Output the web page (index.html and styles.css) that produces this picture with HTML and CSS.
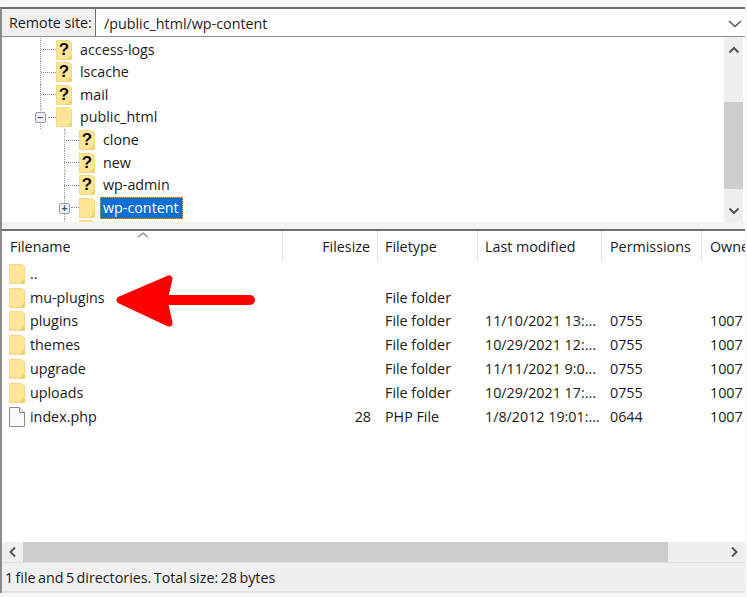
FILE: index.html
```html
<!DOCTYPE html>
<html lang="en">
<head>
<meta charset="utf-8">
<title>Remote site</title>
<link rel="stylesheet" href="styles.css">
</head>
<body>
<svg class="defs" width="0" height="0">
  <symbol id="folder" viewBox="0 0 16 20">
    <path d="M.5.5h12l3 2v17H.5z" fill="#ffe596" stroke="#f6d77f"/>
    <path d="M15.5 14v5.500h-4.500z" fill="#f3cf6a"/>
  </symbol>
  <symbol id="file" viewBox="0 0 16 20">
    <path d="M.5.5h10l5 5v14H.5z" fill="#fafafa" stroke="#8b8b8b"/>
    <path d="M10.500.5v5h5" fill="#eee" stroke="#8b8b8b"/>
  </symbol>
</svg>
<main class="window">
  <div class="site-bar">
    <div class="site-label">Remote site:</div>
    <div class="site-path">
      <span>/public_html/wp-content</span>
      <svg class="chev" width="14" height="8" viewBox="0 0 14 8"><path d="M1 1l6 5.500L13 1" fill="none" stroke="#555" stroke-width="1.500"/></svg>
    </div>
  </div>

  <div class="tree-pane">
    <div class="tree">
      <div class="tree-row l1"><span class="guide"></span><span class="dash"></span><span class="ficon q"><svg><use href="#folder"/></svg><b>?</b></span><span class="name">access-logs</span></div>
      <div class="tree-row l1"><span class="guide"></span><span class="dash"></span><span class="ficon q"><svg><use href="#folder"/></svg><b>?</b></span><span class="name">lscache</span></div>
      <div class="tree-row l1"><span class="guide"></span><span class="dash"></span><span class="ficon q"><svg><use href="#folder"/></svg><b>?</b></span><span class="name">mail</span></div>
      <div class="tree-row l1"><span class="guide"></span><span class="box">−</span><span class="dash short"></span><span class="ficon"><svg><use href="#folder"/></svg></span><span class="name">public_html</span></div>
      <div class="tree-row l2"><span class="guide"></span><span class="dash"></span><span class="ficon q"><svg><use href="#folder"/></svg><b>?</b></span><span class="name">clone</span></div>
      <div class="tree-row l2"><span class="guide"></span><span class="dash"></span><span class="ficon q"><svg><use href="#folder"/></svg><b>?</b></span><span class="name">new</span></div>
      <div class="tree-row l2"><span class="guide"></span><span class="dash"></span><span class="ficon q"><svg><use href="#folder"/></svg><b>?</b></span><span class="name">wp-admin</span></div>
      <div class="tree-row l2"><span class="guide"></span><span class="box">+</span><span class="dash short"></span><span class="ficon"><svg><use href="#folder"/></svg></span><span class="name selected">wp-content</span></div>
      <div class="tree-row l2"><span class="guide"></span><span class="dash"></span><span class="ficon"><svg><use href="#folder"/></svg></span></div>
    </div>
    <div class="vscroll">
      <svg width="12" height="8" viewBox="0 0 12 8"><path d="M1.500 6.500L6 2l4.500 4.500" fill="none" stroke="#555" stroke-width="2"/></svg>
      <div class="vtrack"><div class="vthumb"></div></div>
      <svg width="12" height="8" viewBox="0 0 12 8"><path d="M1.500 1.500L6 6l4.500-4.500" fill="none" stroke="#555" stroke-width="2"/></svg>
    </div>
  </div>

  <div class="splitter"></div>

  <div class="list-pane">
    <div class="list-head">
      <div class="cell c-name">Filename<svg class="sort" width="12" height="6" viewBox="0 0 12 6"><path d="M1 5l5-4 5 4" fill="none" stroke="#8a8a8a" stroke-width="1.200"/></svg></div>
      <div class="cell c-size">Filesize</div>
      <div class="cell c-type">Filetype</div>
      <div class="cell c-date">Last modified</div>
      <div class="cell c-perm">Permissions</div>
      <div class="cell c-own">Owne</div>
    </div>
    <div class="list-body">
      <div class="row"><div class="cell c-name"><svg class="ri"><use href="#folder"/></svg>..</div></div>
      <div class="row"><div class="cell c-name"><svg class="ri"><use href="#folder"/></svg>mu-plugins</div><div class="cell c-size"></div><div class="cell c-type">File folder</div></div>
      <div class="row"><div class="cell c-name"><svg class="ri"><use href="#folder"/></svg>plugins</div><div class="cell c-size"></div><div class="cell c-type">File folder</div><div class="cell c-date">11/10/2021 13:...</div><div class="cell c-perm">0755</div><div class="cell c-own">1007</div></div>
      <div class="row"><div class="cell c-name"><svg class="ri"><use href="#folder"/></svg>themes</div><div class="cell c-size"></div><div class="cell c-type">File folder</div><div class="cell c-date">10/29/2021 12:...</div><div class="cell c-perm">0755</div><div class="cell c-own">1007</div></div>
      <div class="row"><div class="cell c-name"><svg class="ri"><use href="#folder"/></svg>upgrade</div><div class="cell c-size"></div><div class="cell c-type">File folder</div><div class="cell c-date">11/11/2021 9:0...</div><div class="cell c-perm">0755</div><div class="cell c-own">1007</div></div>
      <div class="row"><div class="cell c-name"><svg class="ri"><use href="#folder"/></svg>uploads</div><div class="cell c-size"></div><div class="cell c-type">File folder</div><div class="cell c-date">10/29/2021 17:...</div><div class="cell c-perm">0755</div><div class="cell c-own">1007</div></div>
      <div class="row"><div class="cell c-name"><svg class="ri"><use href="#file"/></svg>index.php</div><div class="cell c-size">28</div><div class="cell c-type">PHP File</div><div class="cell c-date">1/8/2012 19:01:...</div><div class="cell c-perm">0644</div><div class="cell c-own">1007</div></div>
    </div>
    <div class="hscroll">
      <svg class="harrow" width="8" height="12" viewBox="0 0 8 12"><path d="M6.500 1.500L2 6l4.500 4.500" fill="none" stroke="#555" stroke-width="2"/></svg>
      <div class="htrack"><div class="hthumb"></div></div>
      <svg class="harrow" width="8" height="12" viewBox="0 0 8 12"><path d="M1.500 1.500L6 6l-4.500 4.500" fill="none" stroke="#555" stroke-width="2"/></svg>
    </div>
  </div>

  <div class="status">1 file and 5 directories. Total size: 28 bytes</div>

  <svg class="arrow" width="150" height="60" viewBox="0 0 150 60">
    <path d="M13 29L62 8 57 29 62 52z" fill="#f00" stroke="#f00" stroke-width="7" stroke-linejoin="round"/>
    <path d="M55 29H143" fill="none" stroke="#f00" stroke-width="10" stroke-linecap="round"/>
  </svg>
</main>
</body>
</html>
```
FILE: styles.css
```css
* { box-sizing: border-box; }
html, body { margin: 0; padding: 0; background: #f7f7f7; }
body { width: 747px; height: 597px; overflow: hidden; font: 14.3px/20px "Open Sans", "Noto Sans", sans-serif; color: #1a1a24; }
.defs { position: absolute; }
.window { position: relative; width: 745px; height: 586px; margin-top: 7px; border-top: 2px solid #6e6e6e; border-left: 2px solid #8a8a8a; background: #f0f0f0; display: flex; flex-direction: column; overflow: hidden; }

.site-bar { height: 28px; display: flex; background: #fff; border-bottom: 1px solid #8f8f8f; flex: none; }
.site-label { width: 94px; background: #f0f0f0; border-right: 1px solid #6e6e6e; padding: 4px 0 0 7px; }
.site-path { flex: 1; display: flex; justify-content: space-between; align-items: center; padding: 2px 3px 0 8px; }

.tree-pane { height: 185px; display: flex; background: #fff; flex: none; overflow: hidden; }
.tree { flex: 1; padding-top: 1.400px; overflow: hidden; }
.tree-row { height: 22.6px; display: flex; align-items: center; position: relative; }
.tree-row.l1 { padding-left: 39px; }
.tree-row.l2 { padding-left: 62px; }
.guide { position: absolute; top: 0; bottom: 0; width: 0; border-left: 1px dotted #9a9a9a; }
.l1 .guide { left: 38px; }
.l2 .guide { left: 62px; }
.dash { width: 15px; border-top: 1px dotted #8a8a8a; flex: none; }
.dash.short { width: 8px; margin-left: 7px; }
.box { position: absolute; top: 6px; width: 11px; height: 11px; border: 1px solid #9c9ca4; border-radius: 2px; background: #eef0f4; color: #34507a; font: bold 10px/9px "Liberation Sans", sans-serif; text-align: center; }
.l1 .box { left: 33px; }
.l2 .box { left: 57px; }
.ficon { position: relative; width: 16px; height: 20px; margin-right: 6px; flex: none; display: flex; align-items: center; justify-content: center; }
.ficon svg { position: absolute; inset: 0; width: 16px; height: 20px; }
.ficon b { position: relative; font: bold 17px/20px "Liberation Sans", sans-serif; color: #111; }
.name { padding: 0 2px; height: 22px; line-height: 20px; border: 1px solid transparent; margin-left: -1px; white-space: nowrap; }
.name.selected { background: #0a6fd6; color: #fff; border: 1px dotted #e59a3c; padding-right: 3px; }

.vscroll { width: 19px; margin-right: 2px; background: #efefef; display: flex; flex-direction: column; align-items: center; flex: none; padding: 9px 0 7px; }
.vtrack { flex: 1; width: 100%; padding-top: 48px; padding-bottom: 18px; }
.vthumb { height: 100%; background: #cdcdcd; }

.splitter { height: 9px; background: #f3f3f3; border-bottom: 2px solid #6f6f6f; flex: none; }

.list-pane { flex: 1; min-height: 0; background: #fff; display: flex; flex-direction: column; }
.list-head { height: 30px; display: flex; flex: none; }
.list-head .cell { border-right: 1px solid #e2e2e2; padding-top: 6px; position: relative; }
.cell { flex: none; white-space: nowrap; overflow: hidden; }
.c-name { width: 281px; padding-left: 8px; display: flex; align-items: flex-start; }
.c-size { width: 95px; padding-right: 7px; text-align: right; }
.c-type { width: 100px; padding-left: 7px; }
.c-date { width: 124px; padding-left: 7px; }
.c-perm { width: 100px; padding-left: 8px; }
.c-own { width: 43px; padding-left: 8px; }
.list-head .c-own { border-right: 0; }
.sort { position: absolute; left: 135px; top: 1px; }
.list-body { flex: 1; padding-top: 1px; }
.row { height: 23.800px; display: flex; align-items: center; }
.ri { width: 16px; height: 20px; margin-right: 5px; flex: none; }
.row .c-name { align-items: center; padding-left: 7px; }
.hscroll { height: 20px; display: flex; align-items: center; background: #efefef; flex: none; }
.harrow { width: 21px; flex: none; }
.htrack { flex: 1; height: 100%; }
.hthumb { width: 645px; height: 100%; background: #cdcdcd; }

.status { height: 31px; padding: 5px 0 0 3px; border-top: 1px solid #e0e0e0; border-bottom: 2px solid #e4e4e4; background: #f0f0f0; flex: none; word-spacing: -1.300px; }

.arrow { position: absolute; left: 105px; top: 262px; }
```
